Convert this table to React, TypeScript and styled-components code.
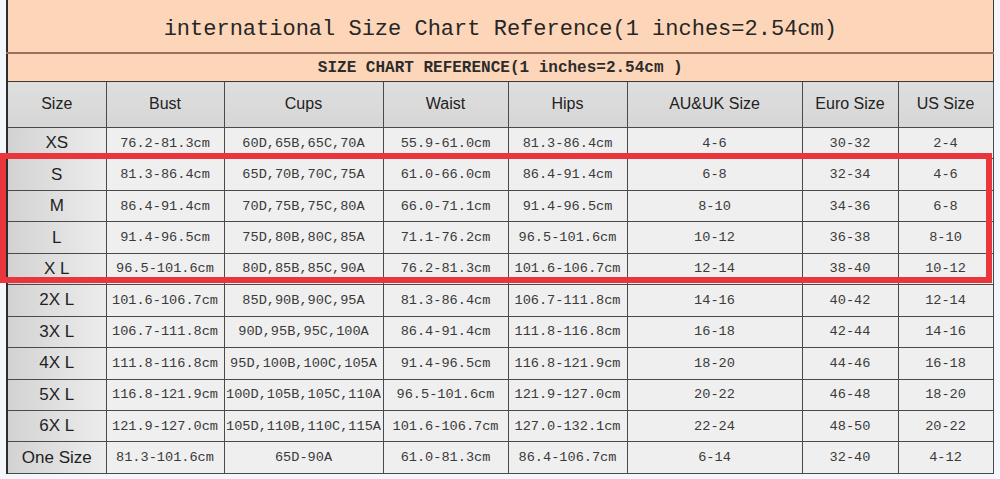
import React from 'react'
import styled, { createGlobalStyle } from 'styled-components'

const GlobalStyle = createGlobalStyle`
  html, body {
    margin: 0;
    padding: 0;
    background: #f3f6fb;
  }
`

const Page = styled.div`
  position: relative;
  width: 1000px;
  height: 479px;
  padding-left: 6px;
  box-sizing: border-box;
  overflow: hidden;
`

const Chart = styled.table`
  border-collapse: collapse;
  table-layout: fixed;
  width: 986px;
  border-left: 2px solid #2c2c2c;
  border-right: 1px solid #3a3a3a;
  border-bottom: 1px solid #3a3a3a;
`

const TitleCell = styled.td`
  height: 46px;
  background: #fdd6b9;
  border-bottom: 2px solid #9b6f5c;
  text-align: center;
  font-family: 'Liberation Mono', monospace;
  font-size: 22px;
  color: #262626;
  padding: 6px 0 0;
`

const SubTitleCell = styled.td`
  height: 26px;
  background: #fdd6b9;
  border-bottom: 1px solid #3a3a3a;
  text-align: center;
  font-family: 'Liberation Mono', monospace;
  font-size: 16px;
  font-weight: bold;
  color: #2c2c2c;
  padding: 1px 0 0;
`

const HeadCell = styled.th<{ $first?: boolean }>`
  height: 43px;
  background: linear-gradient(#dedede, #d6d6d6);
  border: 1px solid #4a4a4a;
  border-top: none;
  ${(p) => (p.$first ? 'border-left: none;' : '')}
  font-family: 'Liberation Sans', Arial, sans-serif;
  font-size: 16px;
  font-weight: normal;
  color: #222;
  padding: 0 0 2px;
`

const SizeCell = styled.td`
  height: 30.45px;
  background: linear-gradient(to right, #d2d2d2, #e2e2e2 60%, #ececec);
  border: 1px solid #4a4a4a;
  border-left: none;
  text-align: center;
  font-family: 'Liberation Sans', Arial, sans-serif;
  font-size: 17px;
  color: #1f1f1f;
  padding: 0;
`

const ValueCell = styled.td`
  height: 30.45px;
  background: #efefef;
  border: 1px solid #4a4a4a;
  text-align: center;
  font-family: 'Liberation Mono', monospace;
  font-size: 13.6px;
  color: #3a3a3a;
  padding: 0;
  white-space: nowrap;
`

const Highlight = styled.div`
  position: absolute;
  left: 0;
  top: 153px;
  width: 992px;
  height: 130px;
  box-sizing: border-box;
  border: 6px solid #e8363c;
  pointer-events: none;
`

const widths = [99, 118, 159, 125, 119, 175, 96, 95]
const heads = ['Size', 'Bust', 'Cups', 'Waist', 'Hips', 'AU&UK Size', 'Euro Size', 'US Size']

const rows: string[][] = [
  ['XS', '76.2-81.3cm', '60D,65B,65C,70A', '55.9-61.0cm', '81.3-86.4cm', '4-6', '30-32', '2-4'],
  ['S', '81.3-86.4cm', '65D,70B,70C,75A', '61.0-66.0cm', '86.4-91.4cm', '6-8', '32-34', '4-6'],
  ['M', '86.4-91.4cm', '70D,75B,75C,80A', '66.0-71.1cm', '91.4-96.5cm', '8-10', '34-36', '6-8'],
  ['L', '91.4-96.5cm', '75D,80B,80C,85A', '71.1-76.2cm', '96.5-101.6cm', '10-12', '36-38', '8-10'],
  ['X L', '96.5-101.6cm', '80D,85B,85C,90A', '76.2-81.3cm', '101.6-106.7cm', '12-14', '38-40', '10-12'],
  ['2X L', '101.6-106.7cm', '85D,90B,90C,95A', '81.3-86.4cm', '106.7-111.8cm', '14-16', '40-42', '12-14'],
  ['3X L', '106.7-111.8cm', '90D,95B,95C,100A', '86.4-91.4cm', '111.8-116.8cm', '16-18', '42-44', '14-16'],
  ['4X L', '111.8-116.8cm', '95D,100B,100C,105A', '91.4-96.5cm', '116.8-121.9cm', '18-20', '44-46', '16-18'],
  ['5X L', '116.8-121.9cm', '100D,105B,105C,110A', '96.5-101.6cm', '121.9-127.0cm', '20-22', '46-48', '18-20'],
  ['6X L', '121.9-127.0cm', '105D,110B,110C,115A', '101.6-106.7cm', '127.0-132.1cm', '22-24', '48-50', '20-22'],
  ['One Size', '81.3-101.6cm', '65D-90A', '61.0-81.3cm', '86.4-106.7cm', '6-14', '32-40', '4-12'],
]

const App: React.FC = () => {
  return (
    <Page>
      <GlobalStyle />
      <Chart>
        <colgroup>
          {widths.map((w, i) => (
            <col key={i} style={{ width: w }} />
          ))}
        </colgroup>
        <tbody>
          <tr>
            <TitleCell colSpan={8}>international Size Chart Reference(1 inches=2.54cm)</TitleCell>
          </tr>
          <tr>
            <SubTitleCell colSpan={8}>SIZE CHART REFERENCE(1 inches=2.54cm )</SubTitleCell>
          </tr>
          <tr>
            {heads.map((h, i) => (
              <HeadCell key={h} $first={i === 0}>
                {h}
              </HeadCell>
            ))}
          </tr>
          {rows.map((r) => (
            <tr key={r[0]}>
              <SizeCell>{r[0]}</SizeCell>
              {r.slice(1).map((v, i) => (
                <ValueCell key={i}>{v}</ValueCell>
              ))}
            </tr>
          ))}
        </tbody>
      </Chart>
      <Highlight />
    </Page>
  )
}

export default App
